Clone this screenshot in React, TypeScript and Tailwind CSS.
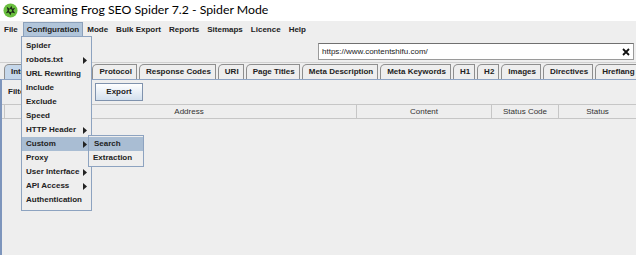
import React from 'react';

const menuBar = ['File', 'Configuration', 'Mode', 'Bulk Export', 'Reports', 'Sitemaps', 'Licence', 'Help'];

const tabs = [
    'Internal', 'External', 'Protocol', 'Response Codes', 'URI', 'Page Titles',
    'Meta Description', 'Meta Keywords', 'H1', 'H2', 'Images', 'Directives', 'Hreflang',
];

const configItems: { label: string; sub?: boolean }[] = [
    { label: 'Spider' },
    { label: 'robots.txt', sub: true },
    { label: 'URL Rewriting' },
    { label: 'Include' },
    { label: 'Exclude' },
    { label: 'Speed' },
    { label: 'HTTP Header', sub: true },
    { label: 'Custom', sub: true },
    { label: 'Proxy' },
    { label: 'User Interface', sub: true },
    { label: 'API Access', sub: true },
    { label: 'Authentication' },
];

const Arrow = () => (
    <svg width="4" height="7" viewBox="0 0 4 7" className="absolute right-[4px] top-[4px]">
        <path d="M0 0 L4 3.5 L0 7 Z" fill="#222" />
    </svg>
);

const FrogIcon = () => (
    <svg width="15" height="15" viewBox="0 0 16 16">
        <circle cx="8" cy="8" r="7.5" fill="#6abf3f" />
        <path d="M4 4 L7 6 L9 3 L10 6 L13 5 L11 8 L13 11 L9 10 L8 13 L6 10 L3 11 L5 8 Z" fill="#1d2a18" />
        <circle cx="8" cy="8" r="1.6" fill="#6abf3f" />
    </svg>
);

export default function App() {
    return (
        <div
            className="relative w-[636px] h-[255px] overflow-hidden bg-[#eeeeee] text-[#222]"
            style={{ fontFamily: '"Liberation Sans", Arial, sans-serif' }}
        >
            {/* Title bar */}
            <div className="h-[21px] bg-white flex items-center pl-[3px] gap-[4px]">
                <FrogIcon />
                <span className="text-[12.3px] leading-none text-black" style={{ fontFamily: 'Lato, sans-serif' }}>
                    Screaming Frog SEO Spider 7.2 - Spider Mode
                </span>
            </div>

            {/* Menu bar */}
            <div className="h-[16px] mt-[1px] flex items-center pl-[1px] text-[8px] font-bold">
                {menuBar.map((m) => (
                    <div
                        key={m}
                        className={
                            m === 'Configuration'
                                ? 'h-[16px] px-[3px] flex items-center bg-[#b1c5da] border border-[#8ca1bb] mr-[1px]'
                                : 'h-[16px] px-[3px] flex items-center mr-[2px]'
                        }
                    >
                        {m}
                    </div>
                ))}
            </div>

            {/* Toolbar */}
            <div className="h-[24px] flex items-center justify-end pr-[2px] pt-[3px]">
                <div className="w-[316px] h-[17px] bg-white border border-[#9a9a9a] border-t-[#707070] flex items-center justify-between pl-[3px] pr-[3px]">
                    <span className="text-[8px]">https://www.contentshifu.com/</span>
                    <svg width="8" height="8" viewBox="0 0 8 8">
                        <path d="M1 1 L7 7 M7 1 L1 7" stroke="#111" strokeWidth="1.8" />
                    </svg>
                </div>
            </div>

            {/* Tabs */}
            <div className="border-t border-[#d0d0d0] pt-[1px]">
                <div className="flex items-end pl-[4px] gap-[2px] h-[15px]">
                    {tabs.map((t, i) => (
                        <div
                            key={t}
                            className={
                                (i === 0 ? 'bg-[#c5d7ea] ' : 'bg-[#eeeeee] ') +
                                'shrink-0 h-[15px] pl-[6px] pr-[4px] flex items-center text-[8px] font-bold whitespace-nowrap border-t border-r border-l border-[#8e8e8e] rounded-tl-[5px]'
                            }
                        >
                            {t}
                        </div>
                    ))}
                </div>
            </div>

            {/* Content panel */}
            <div className="border-l-2 border-[#7d95bc] border-t border-t-[#8ea4c4] h-[200px]">
                <div className="h-[24px] flex items-center pl-[6px]">
                    <span className="text-[8px] font-bold w-[87px]">Filter:</span>
                    <div className="w-[48px] h-[18px] border border-[#7f92ad] bg-gradient-to-b from-white to-[#d3e0ee] flex items-center justify-center text-[8px] font-bold">
                        Export
                    </div>
                </div>
                <div className="h-[15px] flex text-[8px] text-[#333] border-t border-b border-[#c6c6c6]">
                    <div className="w-[18px] ml-[2px] border-l border-r border-[#c6c6c6]" />
                    <div className="w-[335px] flex items-center justify-center border-r border-[#c6c6c6]">Address</div>
                    <div className="w-[135px] flex items-center justify-center border-r border-[#c6c6c6]">Content</div>
                    <div className="w-[67px] flex items-center justify-center border-r border-[#c6c6c6]">Status Code</div>
                    <div className="flex-1 flex items-center justify-center">Status</div>
                </div>
            </div>

            {/* Configuration dropdown */}
            <div className="absolute left-[21px] top-[36px] w-[71px] pt-[2px] pb-[3px] bg-[#eeeeee] border border-[#8da3c0] text-[8px] font-bold">
                {configItems.map((it) => (
                    <div
                        key={it.label}
                        className={
                            (it.label === 'Custom' ? 'bg-[#a9bdd3] ' : '') +
                            'relative h-[14px] flex items-center pl-[4px] whitespace-nowrap'
                        }
                    >
                        {it.label}
                        {it.sub && <Arrow />}
                    </div>
                ))}
            </div>

            {/* Custom submenu */}
            <div className="absolute left-[88px] top-[135px] w-[56px] py-[1px] bg-[#eeeeee] border border-[#8da3c0] text-[8px] font-bold">
                <div className="h-[14px] flex items-center pl-[5px] bg-[#a9bdd3]">Search</div>
                <div className="h-[14px] flex items-center pl-[4px]">Extraction</div>
            </div>
        </div>
    );
}
